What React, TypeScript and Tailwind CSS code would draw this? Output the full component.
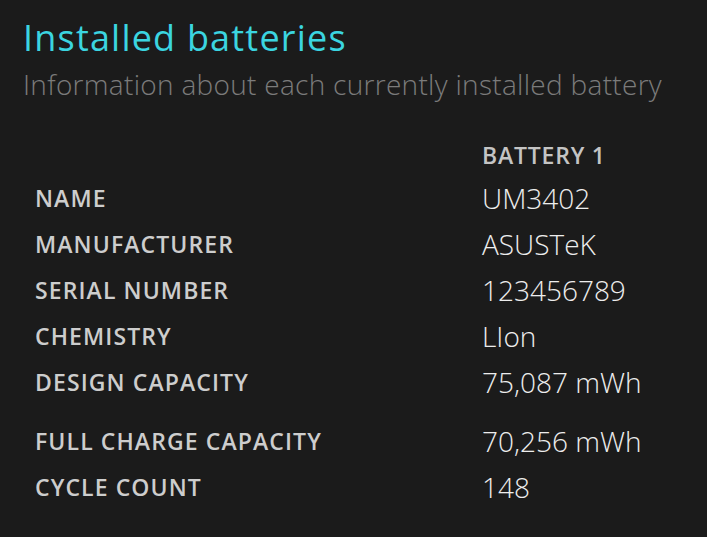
import React from "react";

const rows: { label: string; value: string; gap?: boolean }[] = [
  { label: "NAME", value: "UM3402" },
  { label: "MANUFACTURER", value: "ASUSTeK" },
  { label: "SERIAL NUMBER", value: "123456789" },
  { label: "CHEMISTRY", value: "LIon" },
  { label: "DESIGN CAPACITY", value: "75,087 mWh" },
  { label: "FULL CHARGE CAPACITY", value: "70,256 mWh", gap: true },
  { label: "CYCLE COUNT", value: "148" },
];

export default function App() {
  return (
    <div
      className="w-[707px] h-[537px] bg-[#1b1b1b] overflow-hidden pl-[23px] pt-[16px]"
      style={{ fontFamily: '"Open Sans", "Noto Sans", sans-serif' }}
    >
      <h1 className="text-[36px] leading-[44px] font-normal text-[#3bd5e0] tracking-[1.2px]">
        Installed batteries
      </h1>
      <p className="mt-[6px] text-[28px] leading-[36px] font-light text-[#7b7b7b] tracking-[0.3px]">
        Information about each currently installed battery
      </p>
      <div className="mt-[38px] pl-[12px] grid grid-cols-[447px_1fr] items-center">
        <div className="mb-[5px]" />
        <div className="mb-[5px] text-[23px] leading-[30px] font-semibold text-[#c4c4c4] tracking-[0.8px]">
          BATTERY 1
        </div>
        {rows.map((r) => (
          <React.Fragment key={r.label}>
            <div
              className={`text-[23px] leading-[46px] font-semibold text-[#cdcdcd] tracking-[1.1px] ${r.gap ? "mt-[13px]" : ""}`}
            >
              {r.label}
            </div>
            <div
              className={`text-[28px] leading-[46px] font-light text-[#ededed] ${r.gap ? "mt-[13px]" : ""}`}
            >
              {r.value}
            </div>
          </React.Fragment>
        ))}
      </div>
    </div>
  );
}
